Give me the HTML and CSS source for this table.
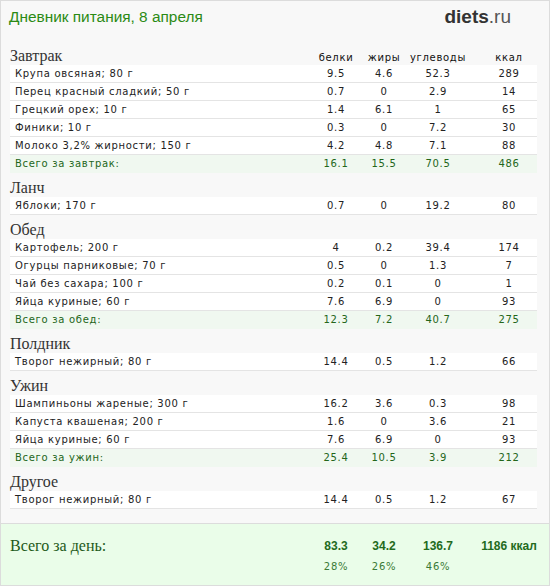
FILE: index.html
```html
<!DOCTYPE html>
<html lang="ru">
<head>
    <meta charset="UTF-8">
    <title>Дневник питания</title>
    <link rel="stylesheet" href="styles.css">
</head>
<body>
    <div class="diary">
        <div class="top">
            <h1>Дневник питания, 8 апреля</h1>
            <div class="logo"><b>diets</b>.ru</div>
        </div>

        <div class="meals">
            <div class="head">
                <h2>Завтрак</h2>
                <span>белки</span><span>жиры</span><span>углеводы</span><span class="kcal">ккал</span>
            </div>
            <div class="row"><span class="name">Крупа овсяная; 80 г</span><span>9.5</span><span>4.6</span><span>52.3</span><span class="kcal">289</span></div>
            <div class="row"><span class="name">Перец красный сладкий; 50 г</span><span>0.7</span><span>0</span><span>2.9</span><span class="kcal">14</span></div>
            <div class="row"><span class="name">Грецкий орех; 10 г</span><span>1.4</span><span>6.1</span><span>1</span><span class="kcal">65</span></div>
            <div class="row"><span class="name">Финики; 10 г</span><span>0.3</span><span>0</span><span>7.2</span><span class="kcal">30</span></div>
            <div class="row"><span class="name">Молоко 3,2% жирности; 150 г</span><span>4.2</span><span>4.8</span><span>7.1</span><span class="kcal">88</span></div>
            <div class="row total"><span class="name">Всего за завтрак:</span><span>16.1</span><span>15.5</span><span>70.5</span><span class="kcal">486</span></div>

            <div class="head"><h2>Ланч</h2></div>
            <div class="row"><span class="name">Яблоки; 170 г</span><span>0.7</span><span>0</span><span>19.2</span><span class="kcal">80</span></div>

            <div class="head"><h2>Обед</h2></div>
            <div class="row"><span class="name">Картофель; 200 г</span><span>4</span><span>0.2</span><span>39.4</span><span class="kcal">174</span></div>
            <div class="row"><span class="name">Огурцы парниковые; 70 г</span><span>0.5</span><span>0</span><span>1.3</span><span class="kcal">7</span></div>
            <div class="row"><span class="name">Чай без сахара; 100 г</span><span>0.2</span><span>0.1</span><span>0</span><span class="kcal">1</span></div>
            <div class="row"><span class="name">Яйца куриные; 60 г</span><span>7.6</span><span>6.9</span><span>0</span><span class="kcal">93</span></div>
            <div class="row total"><span class="name">Всего за обед:</span><span>12.3</span><span>7.2</span><span>40.7</span><span class="kcal">275</span></div>

            <div class="head"><h2>Полдник</h2></div>
            <div class="row"><span class="name">Творог нежирный; 80 г</span><span>14.4</span><span>0.5</span><span>1.2</span><span class="kcal">66</span></div>

            <div class="head"><h2>Ужин</h2></div>
            <div class="row"><span class="name">Шампиньоны жареные; 300 г</span><span>16.2</span><span>3.6</span><span>0.3</span><span class="kcal">98</span></div>
            <div class="row"><span class="name">Капуста квашеная; 200 г</span><span>1.6</span><span>0</span><span>3.6</span><span class="kcal">21</span></div>
            <div class="row"><span class="name">Яйца куриные; 60 г</span><span>7.6</span><span>6.9</span><span>0</span><span class="kcal">93</span></div>
            <div class="row total"><span class="name">Всего за ужин:</span><span>25.4</span><span>10.5</span><span>3.9</span><span class="kcal">212</span></div>

            <div class="head"><h2>Другое</h2></div>
            <div class="row"><span class="name">Творог нежирный; 80 г</span><span>14.4</span><span>0.5</span><span>1.2</span><span class="kcal">67</span></div>
        </div>

        <div class="day">
            <div class="day-row">
                <h2>Всего за день:</h2>
                <b>83.3</b><b>34.2</b><b>136.7</b><b class="kcal">1186 ккал</b>
            </div>
            <div class="day-row pct">
                <span></span><span>28%</span><span>26%</span><span>46%</span><span></span>
            </div>
        </div>
    </div>
</body>
</html>
```

FILE: styles.css
```css
*{
    box-sizing: border-box;
}
body{
    margin: 0;
    background: #fff;
}
.diary{
    width: 550px;
    height: 586px;
    border: 1px solid #dcdcdc;
    background: #f8f8f8;
    font-family: "DejaVu Sans", Verdana, sans-serif;
    font-size: 10px;
    letter-spacing: 0.7px;
    color: #222;
    display: flex;
    flex-direction: column;
}
.top{
    display: flex;
    justify-content: space-between;
    align-items: flex-start;
    height: 40px;
    padding: 0 38px 0 8px;
    letter-spacing: 0;
}
.top h1{
    margin: 7px 0 0;
    font-family: "Liberation Sans", Arial, sans-serif;
    font-weight: normal;
    font-size: 15.4px;
    color: #2b8a14;
}
.logo{
    margin-top: 5px;
    font-family: "Liberation Sans", Arial, sans-serif;
    font-size: 19px;
    color: #555;
}
.logo b{
    color: #333;
}
.meals{
    padding: 0 12px 0 9px;
    flex: 1;
}
.head, .row, .day-row{
    display: grid;
    grid-template-columns: 1fr 48px 48px 60px 69px;
    align-items: center;
    text-align: center;
}
.head{
    height: 24px;
    align-items: end;
}
.head h2, .day h2{
    margin: 0;
    text-align: left;
    letter-spacing: 0;
    font-family: "Liberation Serif", "Times New Roman", serif;
    font-weight: normal;
    font-size: 16px;
    color: #333;
    line-height: 19px;
}
.head span{
    line-height: 15px;
    color: #111;
}
.kcal{
    padding-left: 13px;
}
.row{
    height: 18px;
    background: #fff;
    border-bottom: 1px solid #e4e4e4;
}
.row .name{
    text-align: left;
    padding-left: 5px;
}
.row.total{
    background: #f0f8f0;
    border-bottom-color: #f0f8f0;
    color: #23661a;
}
.day{
    height: 62px;
    border-top: 1px solid #dcdcdc;
    background: #eafde9;
    padding: 12px 12px 0 9px;
    color: #236b1d;
}
.day h2{
    color: #1d5a19;
}
.day b{
    font-family: "Liberation Sans", Arial, sans-serif;
    font-size: 12px;
    letter-spacing: 0;
}
.day .pct{
    margin-top: 6px;
    color: #3a7a36;
}
```
